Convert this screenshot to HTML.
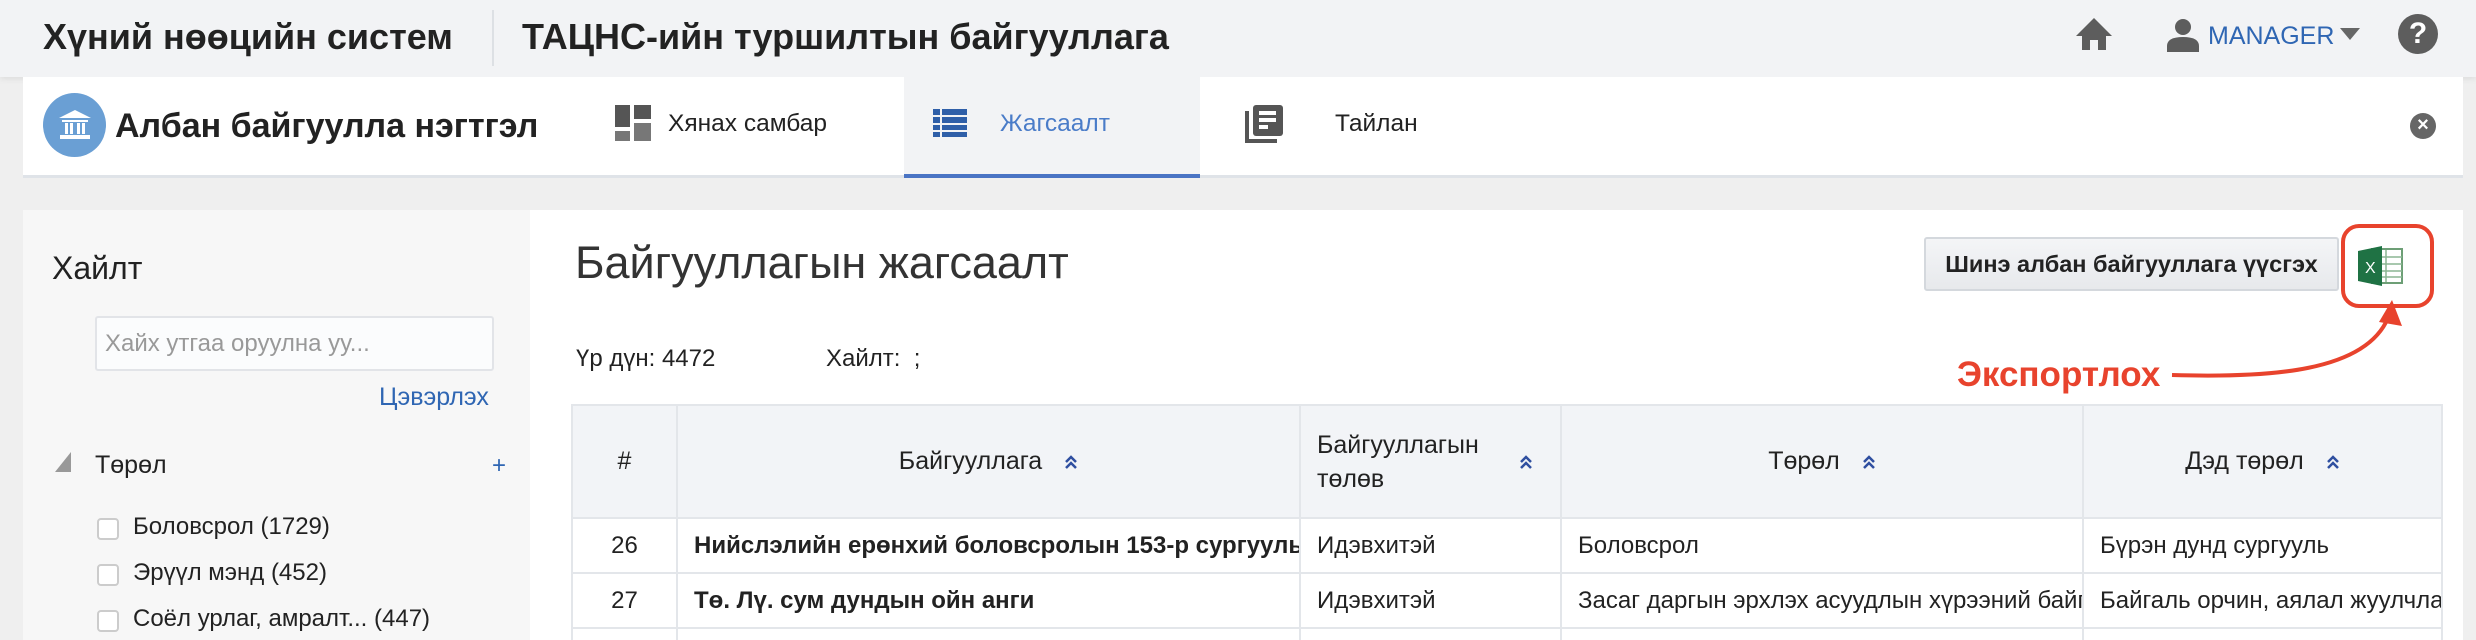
<!DOCTYPE html>
<html style="width:2476px;height:640px;overflow:hidden"><head><meta charset="utf-8"><style>
*{box-sizing:border-box;margin:0;padding:0}
body{width:2476px;height:640px;overflow:hidden;background:#efefef;font-family:"Liberation Sans","Noto Sans CJK SC",sans-serif;color:#222;position:relative}
.a{position:absolute;white-space:nowrap}
.top{position:absolute;left:0;top:0;width:2476px;height:77px;background:#f2f3f5;box-shadow:0 2px 6px rgba(0,0,0,.08)}
.nav{position:absolute;left:23px;top:77px;width:2440px;height:101px;background:#fff;border-bottom:3px solid #dfe3e8}
.side{position:absolute;left:23px;top:210px;width:507px;height:430px;background:#f7f7f7}
.main{position:absolute;left:530px;top:210px;width:1933px;height:430px;background:#fff;overflow:hidden}
table{position:absolute;left:41px;top:194px;border-collapse:collapse;table-layout:fixed;width:1870px}
td,th{border:2px solid #e3e6ea;font-size:24px;overflow:hidden;white-space:nowrap}
th{background:#f2f4f7;font-weight:normal;height:113px;font-size:25px}
td{height:55px;padding-left:16px}
.s{display:inline-block;vertical-align:middle;margin-left:22px}
.cb{position:absolute;left:97px;width:22px;height:22px;border:2px solid #ccc;border-radius:4px;background:#fff}
</style></head><body>
<div class="top"></div>
<div class="a" style="left:43px;top:16px;font-size:36px;font-weight:bold">Хүний нөөцийн систем</div>
<div class="a" style="left:492px;top:10px;width:2px;height:56px;background:#dde0e4"></div>
<div class="a" style="left:522px;top:16px;font-size:36px;font-weight:bold">ТАЦНС-ийн туршилтын байгууллага</div>
<svg class="a" style="left:2074px;top:16px" width="40" height="36" viewBox="0 0 40 36"><path d="M20 2 L38 20 H32 V34 H24 V24 H16 V34 H8 V20 H2 Z" fill="#5d5d5d"/></svg>
<svg class="a" style="left:2166px;top:18px" width="34" height="34" viewBox="0 0 34 34"><circle cx="17" cy="9" r="8" fill="#5d5d5d"/><path d="M1 34 V28 Q1 19 17 19 Q33 19 33 28 V34Z" fill="#5d5d5d"/></svg>
<div class="a" style="left:2208px;top:22px;font-size:25px;color:#2f66b3">MANAGER</div>
<svg class="a" style="left:2340px;top:28px" width="20" height="14"><path d="M0 0H20L10 12Z" fill="#666"/></svg>
<div class="a" style="left:2398px;top:14px;width:40px;height:40px;border-radius:50%;background:#5d5d5d;color:#fff;font-weight:bold;font-size:30px;text-align:center;line-height:40px">?</div>

<div class="nav"></div>
<div class="a" style="left:43px;top:93px;width:63px;height:64px;border-radius:50%;background:#6a9fd4"></div>
<svg class="a" style="left:58px;top:110px" width="34" height="30" viewBox="0 0 34 30"><path d="M17 0 L33 8 H1Z M4 10H30V12H4Z M7 13H10V24H7Z M12 13H15V24H12Z M19 13H22V24H19Z M24 13H27V24H24Z M2 25H32V29H2Z" fill="#fff"/></svg>
<div class="a" style="left:115px;top:107px;font-size:34px;font-weight:bold">Албан байгуулла нэгтгэл</div>
<svg class="a" style="left:615px;top:105px" width="36" height="36"><rect x="0" y="0" width="15" height="22" fill="#555"/><rect x="19" y="0" width="17" height="14" fill="#555"/><rect x="19" y="18" width="17" height="18" fill="#777"/><rect x="0" y="26" width="15" height="10" fill="#777"/></svg>
<div class="a" style="left:668px;top:110px;font-size:24.5px">Хянах самбар</div>
<div class="a" style="left:904px;top:77px;width:296px;height:101px;background:#f2f3f5;border-bottom:4px solid #4a74c4"></div>
<svg class="a" style="left:933px;top:109px" width="34" height="28"><g fill="#2f5fa8"><rect x="0" y="0" width="7" height="6"/><rect x="9" y="0" width="25" height="6"/><rect x="0" y="8" width="7" height="6"/><rect x="9" y="8" width="25" height="6"/><rect x="0" y="16" width="7" height="5"/><rect x="9" y="16" width="25" height="5"/><rect x="0" y="23" width="7" height="5"/><rect x="9" y="23" width="25" height="5"/></g></svg>
<div class="a" style="left:1000px;top:110px;font-size:24.5px;color:#4a7cc8">Жагсаалт</div>
<svg class="a" style="left:1244px;top:103px" width="40" height="40"><path d="M3 8 V38 H33" stroke="#555" stroke-width="4" fill="none"/><rect x="9" y="2" width="30" height="31" rx="3" fill="#555"/><rect x="15" y="8" width="17" height="4" fill="#fff"/><rect x="15" y="15" width="17" height="4" fill="#fff"/><rect x="15" y="22" width="9" height="4" fill="#fff"/></svg>
<div class="a" style="left:1335px;top:110px;font-size:24.5px">Тайлан</div>
<div class="a" style="left:2410px;top:113px;width:26px;height:26px;border-radius:50%;background:#666;color:#fff;font-size:20px;font-weight:bold;text-align:center;line-height:25px">×</div>

<div class="side"></div>
<div class="a" style="left:52px;top:250px;font-size:32px">Хайлт</div>
<div class="a" style="left:95px;top:316px;width:399px;height:55px;border:2px solid #e2e4e8;background:#fbfcfd;border-radius:3px;font-size:24px;color:#999;padding:12px 0 0 8px">Хайх утгаа оруулна уу...</div>
<div class="a" style="left:379px;top:383px;font-size:25px;color:#2f66b3">Цэвэрлэх</div>
<svg class="a" style="left:55px;top:452px" width="16" height="20"><path d="M16 0V20H0Z" fill="#999"/></svg>
<div class="a" style="left:95px;top:451px;font-size:25px">Төрөл</div>
<div class="a" style="left:492px;top:452px;font-size:24px;color:#2f66b3">+</div>
<div class="cb" style="top:518px"></div><div class="a" style="left:133px;top:513px;font-size:24px">Боловсрол (1729)</div>
<div class="cb" style="top:564px"></div><div class="a" style="left:133px;top:559px;font-size:24px">Эрүүл мэнд (452)</div>
<div class="cb" style="top:610px"></div><div class="a" style="left:133px;top:605px;font-size:24px">Соёл урлаг, амралт... (447)</div>

<div class="main">
<table>
<colgroup><col style="width:105px"><col style="width:623px"><col style="width:261px"><col style="width:522px"><col style="width:359px"></colgroup>
<tr><th>#</th><th>Байгууллага<svg class="s" width="14" height="16"><path d="M2 8 L7 3 L12 8 M2 14 L7 9 L12 14" stroke="#2f4fa0" stroke-width="2.5" fill="none"/></svg></th><th style="text-align:left;padding-left:16px;line-height:34px"><span style="display:inline-block;vertical-align:middle">Байгууллагын<br>төлөв</span><svg class="s" style="margin-left:40px" width="14" height="16"><path d="M2 8 L7 3 L12 8 M2 14 L7 9 L12 14" stroke="#2f4fa0" stroke-width="2.5" fill="none"/></svg></th><th>Төрөл<svg class="s" width="14" height="16"><path d="M2 8 L7 3 L12 8 M2 14 L7 9 L12 14" stroke="#2f4fa0" stroke-width="2.5" fill="none"/></svg></th><th>Дэд төрөл<svg class="s" width="14" height="16"><path d="M2 8 L7 3 L12 8 M2 14 L7 9 L12 14" stroke="#2f4fa0" stroke-width="2.5" fill="none"/></svg></th></tr>
<tr><td style="text-align:center;padding:0">26</td><td style="font-weight:bold;padding-left:16px">Нийслэлийн ерөнхий боловсролын 153-р сургууль</td><td>Идэвхитэй</td><td>Боловсрол</td><td>Бүрэн дунд сургууль</td></tr>
<tr><td style="text-align:center;padding:0">27</td><td style="font-weight:bold">Тө. Лү. сум дундын ойн анги</td><td>Идэвхитэй</td><td>Засаг даргын эрхлэх асуудлын хүрээний байгууллага</td><td>Байгаль орчин, аялал жуулчлал</td></tr>
<tr><td></td><td></td><td></td><td></td><td></td></tr>
</table>
</div>
<div class="a" style="left:575px;top:237px;font-size:45px;color:#333">Байгууллагын жагсаалт</div>
<div class="a" style="left:1924px;top:237px;width:415px;height:54px;border:2px solid #d4d8dd;border-radius:3px;background:linear-gradient(#f4f5f7,#e7e9ec);font-size:23.5px;font-weight:bold;text-align:center;line-height:50px">Шинэ албан байгууллага үүсгэх</div>
<div class="a" style="left:2341px;top:224px;width:93px;height:84px;border:4px solid #e8432d;border-radius:18px"></div>
<svg class="a" style="left:2358px;top:246px" width="46" height="40"><rect x="14" y="3" width="30" height="34" fill="#fff" stroke="#6d9f76" stroke-width="2"/><g stroke="#8bb693" stroke-width="1.5"><path d="M28 4V36M14 11H44M14 18H44M14 25H44M14 31H44"/></g><path d="M0 5 L24 0 V40 L0 35Z" fill="#1f7244"/><text x="7" y="27" font-size="16" fill="#fff" font-family="Liberation Sans">X</text></svg>
<svg class="a" style="left:2150px;top:300px" width="260" height="90"><path d="M22 75 C120 78 215 72 238 18" stroke="#e8432d" stroke-width="4" fill="none"/><path d="M229 22 L242 0 L252 26Z" fill="#e8432d"/></svg>
<div class="a" style="left:1957px;top:355px;font-size:35px;font-weight:bold;color:#e8432d">Экспортлох</div>
<div class="a" style="left:576px;top:345px;font-size:24px">Үр дүн: 4472</div>
<div class="a" style="left:826px;top:345px;font-size:24px">Хайлт: &nbsp;;</div>
</body></html>
